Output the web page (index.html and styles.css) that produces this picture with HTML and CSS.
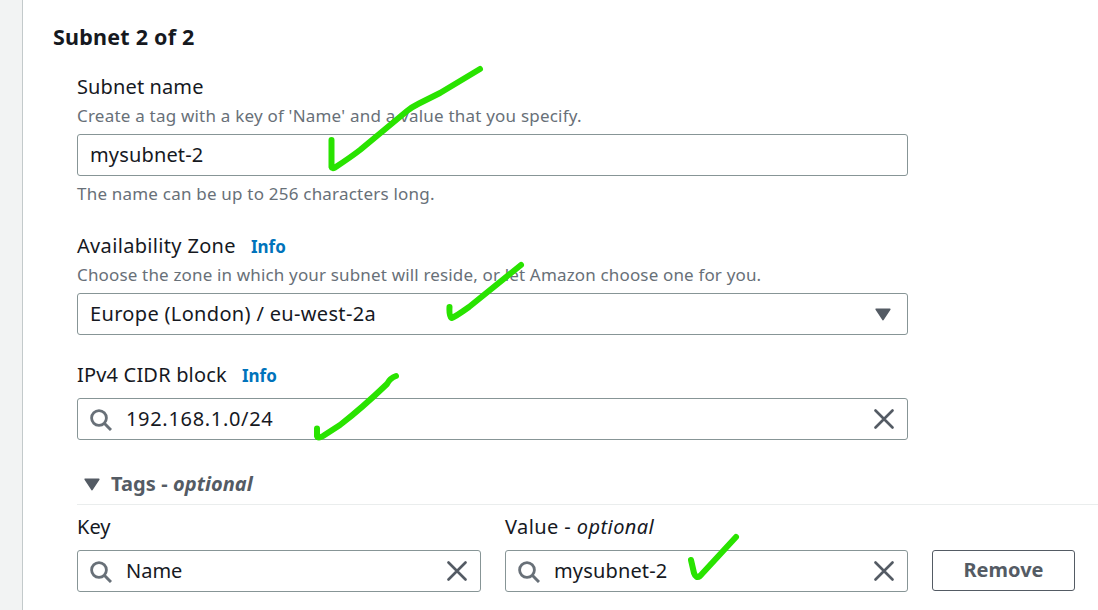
FILE: index.html
```html
<!DOCTYPE html>
<html lang="en">
<head>
<meta charset="utf-8">
<title>Create subnet</title>
<link rel="stylesheet" href="styles.css">
</head>
<body>
<svg class="symbols" aria-hidden="true">
  <symbol id="search" viewBox="0 0 22 22"><circle cx="9" cy="9" r="7.4" fill="none" stroke="#687078" stroke-width="2.800"/><path d="M14 14l7 7" fill="none" stroke="#687078" stroke-width="3"/></symbol>
  <symbol id="close" viewBox="0 0 20 20"><path d="M1.500 1.500l17 17M18.500 1.500l-17 17" fill="none" stroke="#545b64" stroke-width="2.600" stroke-linecap="round"/></symbol>
  <symbol id="caret" viewBox="0 0 16 13"><path d="M1.200 1.200h13.600L8 11.600z" fill="#545b64" stroke="#545b64" stroke-width="1.600" stroke-linejoin="round"/></symbol>
</svg>
<main class="page">
  <section class="panel">
    <h2 class="title">Subnet 2 of 2</h2>
    <div class="field name-field">
      <label class="label"><span class="t-subnet">Subnet name</span></label>
      <p class="hint t-hint1">Create a tag with a key of 'Name' and a value that you specify.</p>
      <div class="control"><span class="t-value">mysubnet-2</span></div>
      <p class="help">The name can be up to 256 characters long.</p>
    </div>
    <div class="field zone-field">
      <label class="label"><span class="t-zone">Availability Zone</span><a class="info">Info</a></label>
      <p class="hint t-hint2">Choose the zone in which your subnet will reside, or let Amazon choose one for you.</p>
      <div class="control"><span class="t-europe">Europe (London) / eu-west-2a</span><svg class="caret"><use href="#caret"/></svg></div>
    </div>
    <div class="field cidr-field">
      <label class="label"><span class="t-cidr">IPv4 CIDR block</span><a class="info">Info</a></label>
      <div class="control"><svg class="search"><use href="#search"/></svg><span class="t-ip">192.168.1.0/24</span><svg class="close"><use href="#close"/></svg></div>
    </div>
    <div class="tags-head"><svg class="caret"><use href="#caret"/></svg><h3 class="tags-title">Tags - <em>optional</em></h3></div>
    <div class="tags-row">
      <div class="tag-field">
        <label class="label"><span>Key</span></label>
        <div class="control"><svg class="search"><use href="#search"/></svg><span>Name</span><svg class="close"><use href="#close"/></svg></div>
      </div>
      <div class="tag-field">
        <label class="label"><span class="t-optional">Value - <em>optional</em></span></label>
        <div class="control"><svg class="search"><use href="#search"/></svg><span class="t-value">mysubnet-2</span><svg class="close"><use href="#close"/></svg></div>
      </div>
      <button class="remove">Remove</button>
    </div>
  </section>
  <svg class="marks" viewBox="0 0 1098 610" aria-hidden="true">
    <path d="M331.500 140V167Q332 169 335 167.500Q351 157 360 150L407 111Q412 107 419 103.500L440 93L480 69"/>
    <path d="M449.500 307Q449 316 451.500 318Q455 317 469 307L521 265"/>
    <path d="M317 428.500V436Q318 439 323 436L340 425Q362 408 387 384Q390 378 396 376"/>
    <path d="M691 560L694 573Q696 579 700 576L736 537"/>
  </svg>
</main>
</body>
</html>
```
FILE: styles.css
```css
* { box-sizing: border-box; }
body { margin: 0; background: #f2f3f3; color: #16191f; font-family: "Noto Sans", sans-serif; font-size: 20px; }
h2, h3, p { margin: 0; }
.symbols { display: none; }
.page { position: relative; height: 610px; padding-left: 22px; overflow: hidden; }
.panel { height: 610px; padding: 22px 0 0 54px; background: #fff; border-left: 1px solid #c3cacb; white-space: nowrap; }
.title { height: 30px; margin-left: -24px; font-size: 21.500px; line-height: 30px; font-weight: 700; letter-spacing: .22px; }
.label { display: flex; align-items: center; height: 24px; line-height: 24px; }
.hint, .help { color: #687078; font-size: 17px; line-height: 24px; letter-spacing: .21px; }
.field { width: 831px; }
.name-field { margin-top: 23px; }
.hint { margin-top: 5px; height: 24px; }
.control { display: flex; align-items: center; height: 42px; padding: 0 13px 0 12px; border: 1px solid #879596; border-radius: 3px; }
.control span { padding-bottom: 2px; }
.hint + .control { margin-top: 6px; }
.help { margin-top: 6px; height: 24px; }
.zone-field { margin-top: 28px; }
.cidr-field { margin-top: 28px; }
.cidr-field .control { margin-top: 11px; }
.info { margin-left: 15px; padding-top: 2px; color: #0073bb; font-size: 17px; font-weight: 700; }
.search { width: 22px; height: 22px; margin: 1px 14px 0 0; flex: none; }
.close { width: 20px; height: 20px; margin-left: auto; flex: none; }
.caret { width: 16px; height: 13px; margin-left: auto; flex: none; }
.control .caret { margin-right: 3px; }
.tags-head { display: flex; align-items: center; height: 41px; margin-top: 24px; padding: 0 0 1px 7px; border-bottom: 1px solid #eaeded; }
.tags-head .caret { margin: 2px 0 0; }
.tags-title { margin-left: 11px; color: #545b64; font-size: 20px; line-height: 28px; font-weight: 700; letter-spacing: .07px; }
.tags-row { display: grid; grid-template-columns: 404px 403px 143px; gap: 24px; align-items: end; margin-top: 10px; }
.tag-field .control { margin-top: 11px; }
.remove { height: 41px; margin-bottom: 1px; padding: 0 0 2px; border: 1px solid #545b64; border-radius: 3px; background: #fff; color: #545b64; font: 700 20px/28px "Noto Sans", sans-serif; }
.t-subnet { letter-spacing: .12px; }
.t-hint2 { letter-spacing: .16px; }
.t-value { letter-spacing: .15px; }
.t-zone { letter-spacing: .33px; }
.t-europe { letter-spacing: .33px; }
.t-cidr { letter-spacing: .18px; }
.t-ip { letter-spacing: .68px; }
.t-optional { letter-spacing: .42px; }
.marks { position: absolute; inset: 0; width: 1098px; height: 610px; fill: none; stroke: #29e300; stroke-width: 6px; stroke-linecap: round; stroke-linejoin: round; }
```
